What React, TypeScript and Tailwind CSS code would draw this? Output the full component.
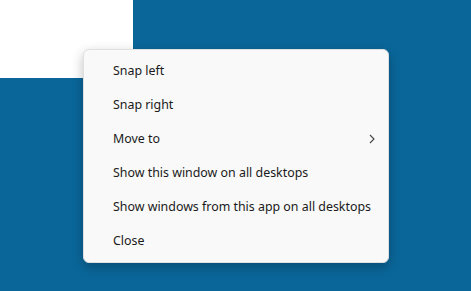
import React from 'react';

const items = [
  { label: 'Snap left' },
  { label: 'Snap right' },
  { label: 'Move to', sub: true },
  { label: 'Show this window on all desktops' },
  { label: 'Show windows from this app on all desktops' },
  { label: 'Close' },
];

export default function App() {
  return (
    <div className="relative w-[471px] h-[291px] overflow-hidden bg-[#0a6699]" style={{ fontFamily: '"Noto Sans", "Open Sans", sans-serif' }}>
      {/* window behind */}
      <div className="absolute left-0 top-0 w-[133px] h-[78px] bg-white" />

      {/* context menu */}
      <div className="absolute left-[83px] top-[49px] w-[306px] py-[4px] rounded-[6px] bg-[#f9f9f9] border border-[#e0e0e0] shadow-[0_4px_12px_rgba(0,0,0,0.25)]">
        {items.map((item) => (
          <div key={item.label} className="h-[34px] flex items-center pl-[29px] pr-[12px] text-[12.4px] text-[#1a1a1a] whitespace-nowrap">
            <span className="flex-1">{item.label}</span>
            {item.sub && (
              <svg width="6" height="10" viewBox="0 0 6 10" className="mr-[1px]">
                <path d="M1 1 L5 5 L1 9" fill="none" stroke="#444" strokeWidth="1.1" />
              </svg>
            )}
          </div>
        ))}
      </div>
    </div>
  );
}
